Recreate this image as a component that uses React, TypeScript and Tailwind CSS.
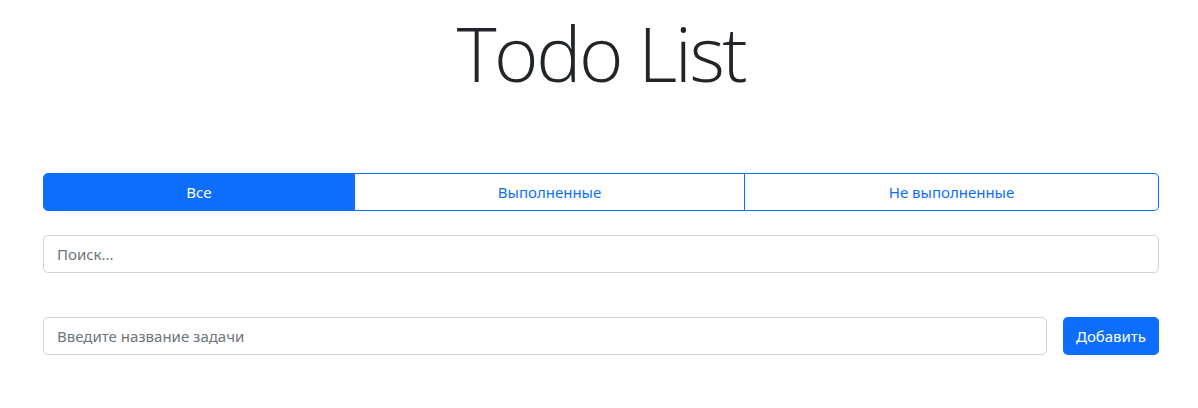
export default function App() {
  return (
    <div className="min-h-screen bg-white text-[#212529] font-['Noto_Sans','Open_Sans',sans-serif]">
      <div className="ml-[43px] w-[1116px] flex flex-col">
        <h1 className="mt-[5px] text-center text-[76px] leading-[96px] font-light font-['Open_Sans','Noto_Sans',sans-serif] tracking-[-2.5px]">
          Todo List
        </h1>

        <div className="mt-[72px] flex h-[38px] text-[15px]">
          <button className="w-[312px] rounded-l-[5px] border border-[#0d6efd] bg-[#0d6efd] text-white">
            Все
          </button>
          <button className="w-[390px] border-y border-r border-[#0d6efd] bg-white text-[#0d6efd]">
            Выполненные
          </button>
          <button className="flex-1 rounded-r-[5px] border-y border-r border-[#0d6efd] bg-white text-[#0d6efd]">
            Не выполненные
          </button>
        </div>

        <input
          className="mt-[24px] h-[38px] w-full rounded-[5px] border border-[#ced4da] px-[13px] text-[15px] outline-none placeholder:text-[#6c757d]"
          placeholder="Поиск..."
        />

        <div className="mt-[44px] flex gap-[16px]">
          <input
            className="h-[38px] flex-1 rounded-[5px] border border-[#ced4da] px-[13px] text-[15px] outline-none placeholder:text-[#6c757d]"
            placeholder="Введите название задачи"
          />
          <button className="h-[38px] w-[96px] rounded-[5px] bg-[#0d6efd] text-[15px] text-white">
            Добавить
          </button>
        </div>
      </div>
    </div>
  );
}
